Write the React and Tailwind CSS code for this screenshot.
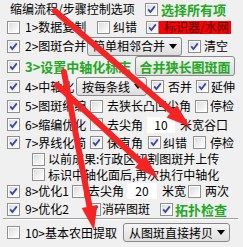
import React from "react";

// red annotation arrows drawn over the dialog
const ARROWS = [
  { x1: 55, y1: 11, x2: 190, y2: 127 },
  { x1: 57, y1: 85, x2: 158, y2: 178 },
  { x1: 64, y1: 72, x2: 94, y2: 230 },
];

function Arrow({ x1, y1, x2, y2 }) {
  const dx = x2 - x1;
  const dy = y2 - y1;
  const len = Math.hypot(dx, dy);
  const ux = dx / len;
  const uy = dy / len;
  const L = 24;
  const W = 8;
  const bx = x2 - ux * L;
  const by = y2 - uy * L;
  const pts = `${x2},${y2} ${bx - uy * W},${by + ux * W} ${bx + uy * W},${by - ux * W}`;
  return (
    <g>
      <line x1={x1} y1={y1} x2={bx} y2={by} stroke="#f52424" strokeWidth="6" strokeLinecap="round" />
      <polygon points={pts} fill="#f52424" />
    </g>
  );
}

function Check({ on }) {
  return (
    <svg width="13" height="13" viewBox="0 0 13 13" className="shrink-0">
      <defs>
        <linearGradient id="cbg" x1="0" y1="0" x2="1" y2="1">
          <stop offset="0" stopColor="#dcdcdc" />
          <stop offset="1" stopColor="#ffffff" />
        </linearGradient>
      </defs>
      <rect x="0.5" y="0.5" width="12" height="12" fill="#fff" stroke="#8e8f8f" />
      <rect x="2" y="2" width="9" height="9" fill="url(#cbg)" />
      {on && (
        <path d="M3.2 6.4 L5.4 9 L9.8 3.4" fill="none" stroke="#3b47a6" strokeWidth="1.8" />
      )}
    </svg>
  );
}

function Combo({ w, text }) {
  return (
    <div
      className={`${w} h-[19px] shrink-0 flex items-center justify-between rounded-[3px] border border-[#8a8a8a] bg-linear-to-b from-[#f6f6f6] to-[#dedede] pl-[5px] pr-[4px]`}
    >
      <span>{text}</span>
      <svg width="8" height="5" viewBox="0 0 8 5">
        <path d="M0 0h8L4 5z" fill="#000" />
      </svg>
    </div>
  );
}

function Field({ w, value }) {
  return (
    <div className={`${w} h-[16px] shrink-0 bg-white flex items-center justify-center`}>{value}</div>
  );
}

function Row({ h, children, pl = "pl-[7px]" }) {
  return <div className={`flex items-center ${h} ${pl}`}>{children}</div>;
}

export default function App() {
  return (
    <div className="relative w-[243px] h-[247px] overflow-hidden bg-[#f0f0f0] text-[12px] leading-none text-black font-['Noto_Sans_CJK_SC','Liberation_Sans',sans-serif] whitespace-nowrap">
      <Row h="h-[18px]" pl="pl-[10px]">
        <span className="w-[135px] shrink-0">缩编流程/步骤控制选项</span>
        <Check on />
        <span className="ml-[3px] text-[13px] font-bold text-[#23a823]">选择所有项</span>
      </Row>

      <Row h="h-[18px]">
        <Check />
        <span className="ml-[5px] w-[72px] shrink-0">1&gt;数据复制</span>
        <Check />
        <span className="ml-[3px] w-[33px] shrink-0">纠错</span>
        <Check on />
        <span className="w-[72px] h-[13px] shrink-0 bg-[#ff0000] text-[#4a0000] flex items-center pl-[5px]">
          标识器/水网
        </span>
      </Row>

      <Row h="h-[20px]">
        <Check on />
        <span className="ml-[5px] w-[62px] shrink-0">2&gt;图斑合并</span>
        <Combo w="w-[95px]" text="简单相邻合并" />
        <span className="ml-[6px]">
          <Check on />
        </span>
        <span className="ml-[3px]">清空</span>
      </Row>

      <Row h="h-[20px]">
        <Check on />
        <span className="ml-[5px] w-[110px] shrink-0 text-[13px] font-bold text-[#23a823]">
          3&gt;设置中轴化标志
        </span>
        <div className="w-[100px] h-[20px] shrink-0 flex items-center justify-center rounded-[3px] border border-[#8a8a8a] bg-linear-to-b from-[#f6f6f6] to-[#dedede] text-[13px] font-bold text-[#23a823]">
          合并狭长图斑面
        </div>
      </Row>

      <Row h="h-[21px]">
        <Check on />
        <span className="ml-[5px] w-[51px] shrink-0">4&gt;中轴化</span>
        <Combo w="w-[71px]" text="按每条线" />
        <span className="ml-[4px]">
          <Check on />
        </span>
        <span className="ml-[4px] w-[28px] shrink-0">否并</span>
        <Check on />
        <span className="ml-[2px]">延伸</span>
      </Row>

      <Row h="h-[18px]">
        <Check on />
        <span className="ml-[5px] w-[65px] shrink-0">5&gt;图斑缩编</span>
        <Check />
        <span className="ml-[4px] w-[88px] shrink-0">去狭长凸凹尖角</span>
        <Check />
        <span className="ml-[2px]">停检</span>
      </Row>

      <Row h="h-[19px]">
        <Check on />
        <span className="ml-[5px] w-[65px] shrink-0">6&gt;缩编优化</span>
        <Check />
        <span className="ml-[4px] w-[40px] shrink-0">去尖角</span>
        <Field w="w-[28px]" value="10" />
        <span className="ml-[5px]">米宽谷口</span>
      </Row>

      <Row h="h-[17px]">
        <Check on />
        <span className="ml-[5px] w-[65px] shrink-0">7&gt;界线化简</span>
        <Check on />
        <span className="ml-[4px] w-[41px] shrink-0">保直角</span>
        <Check on />
        <span className="ml-[2px] w-[30px] shrink-0">纠错</span>
        <Check />
        <span className="ml-[4px]">停检</span>
      </Row>

      <Row h="h-[16px]" pl="pl-[32px]">
        <Check />
        <span className="ml-[3px]">以前成果:行政区切割图斑并上传</span>
      </Row>

      <Row h="h-[15px]" pl="pl-[32px]">
        <Check />
        <span className="ml-[3px]">标识中轴化面后,再次执行中轴化</span>
      </Row>

      <Row h="h-[18px]">
        <Check on />
        <span className="ml-[5px] w-[47px] shrink-0">8&gt;优化1</span>
        <Check />
        <span className="ml-[3px] w-[39px] shrink-0">去尖角</span>
        <Field w="w-[30px]" value="20" />
        <span className="ml-[5px] w-[26px] shrink-0">米宽</span>
        <Check />
        <span className="ml-[4px]">两次</span>
      </Row>

      <Row h="h-[18px]">
        <Check on />
        <span className="ml-[5px] w-[63px] shrink-0">9&gt;优化2</span>
        <Check on />
        <span className="ml-[1px] w-[58px] shrink-0">消碎图斑</span>
        <Check on />
        <span className="ml-[2px] text-[13px] font-bold text-[#23a823]">拓扑检查</span>
      </Row>

      <div className="mx-[3px] mr-[5px] h-[2px] border-t border-[#a0a0a0] border-b border-b-white" />

      <Row h="h-[25px]">
        <Check />
        <span className="ml-[5px] w-[98px] shrink-0">10&gt;基本农田提取</span>
        <Combo w="w-[107px]" text="从图斑直接拷贝" />
      </Row>

      <Row h="h-[18px]">
        <Check />
        <span className="ml-[5px]">11&gt;图斑转出成果数据库</span>
      </Row>

      <svg className="absolute inset-0 pointer-events-none" width="243" height="247" viewBox="0 0 243 247">
        {ARROWS.map((a, i) => (
          <Arrow key={i} {...a} />
        ))}
      </svg>
    </div>
  );
}
